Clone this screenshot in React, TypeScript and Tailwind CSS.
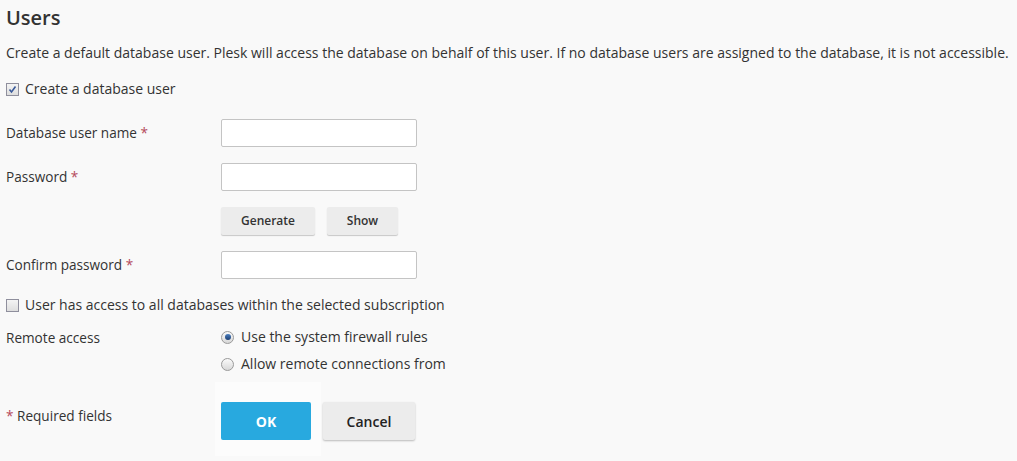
import React from "react";

const font = { fontFamily: '"Open Sans", "Noto Sans", sans-serif' };

function Check({ checked }: { checked?: boolean }) {
    return (
        <span className="w-[13px] h-[13px] border border-[#8f8f9d] bg-gradient-to-b from-[#f4f4f4] to-[#dedede] flex items-center justify-center shrink-0">
            {checked && (
                <svg width="9" height="9" viewBox="0 0 9 9">
                    <path d="M1.5 4.5 L3.5 7 L7.5 1.5" fill="none" stroke="#3a5a9a" strokeWidth="1.6" />
                </svg>
            )}
        </span>
    );
}

function Radio({ checked }: { checked?: boolean }) {
    return (
        <span className="w-[13px] h-[13px] rounded-full border border-[#9a9a9a] bg-gradient-to-b from-[#fafafa] to-[#d8d8d8] flex items-center justify-center shrink-0">
            {checked && <span className="w-[6px] h-[6px] rounded-full bg-gradient-to-b from-[#4b7fc0] to-[#1d3f72]" />}
        </span>
    );
}

const Star = () => <span className="text-[#b5495b]"> *</span>;

function FieldRow({ label, className }: { label: string; className?: string }) {
    return (
        <div className={"flex items-center " + (className ?? "")}>
            <div className="w-[215px] leading-[18px] text-[13.6px]">{label}<Star /></div>
            <div className="w-[196px] h-[28px] bg-white border border-[#c4c4c4] rounded-[2px]" />
        </div>
    );
}

export default function App() {
    return (
        <div className="min-h-[461px] w-[1017px] bg-[#f9f9f9] pl-[6px] pt-[6px] text-[14px] text-[#333]" style={font}>
            <h2 className="text-[20px] leading-[24px] font-semibold text-[#333]">Users</h2>
            <p className="mt-[14px] leading-[18px] whitespace-nowrap">
                Create a default database user. Plesk will access the database on behalf of this user. If no database users are assigned to the database, it is not accessible.
            </p>
            <label className="mt-[18px] flex items-center gap-[6px] leading-[18px]">
                <Check checked />
                <span>Create a database user</span>
            </label>

            <FieldRow label="Database user name" className="mt-[21px]" />
            <FieldRow label="Password" className="mt-[16px]" />
            <div className="mt-[16px] flex gap-[12px] pl-[215px]">
                <button className="w-[94px] h-[28px] bg-[#ececec] shadow-[0_1px_1px_rgba(0,0,0,0.2)] rounded-[2px] text-[12px] font-semibold text-[#333]">Generate</button>
                <button className="w-[71px] h-[28px] bg-[#ececec] shadow-[0_1px_1px_rgba(0,0,0,0.2)] rounded-[2px] text-[12px] font-semibold text-[#333]">Show</button>
            </div>
            <FieldRow label="Confirm password" className="mt-[16px]" />

            <label className="mt-[17px] flex items-center gap-[6px] leading-[18px]">
                <Check />
                <span>User has access to all databases within the selected subscription</span>
            </label>

            <div className="mt-[14px] flex">
                <div className="w-[215px] leading-[18px] pt-[1px] text-[13.6px]">Remote access</div>
                <div className="flex flex-col gap-[9px]">
                    <label className="flex items-center gap-[7px] leading-[18px]">
                        <Radio checked />
                        <span>Use the system firewall rules</span>
                    </label>
                    <label className="flex items-center gap-[7px] leading-[18px]">
                        <Radio />
                        <span>Allow remote connections from</span>
                    </label>
                </div>
            </div>

            <div className="mt-[29px] flex items-start">
                <div className="w-[215px] leading-[18px] pt-[5px] text-[13.6px]"><span className="text-[#b5495b]">* </span>Required fields</div>
                <div className="flex gap-[12px]">
                    <div className="bg-[#fcfcfc] -ml-[6px] pl-[6px] pr-[10px] -mt-[20px] pt-[20px] pb-[16px]">
                        <button className="block w-[90px] h-[38px] bg-[#28a9df] rounded-[2px] text-[14px] font-bold text-white">OK</button>
                    </div>
                    <button className="-ml-[10px] w-[92px] h-[38px] bg-[#ececec] shadow-[0_1px_2px_rgba(0,0,0,0.25)] rounded-[2px] text-[14px] font-semibold text-[#222]">Cancel</button>
                </div>
            </div>
        </div>
    );
}
